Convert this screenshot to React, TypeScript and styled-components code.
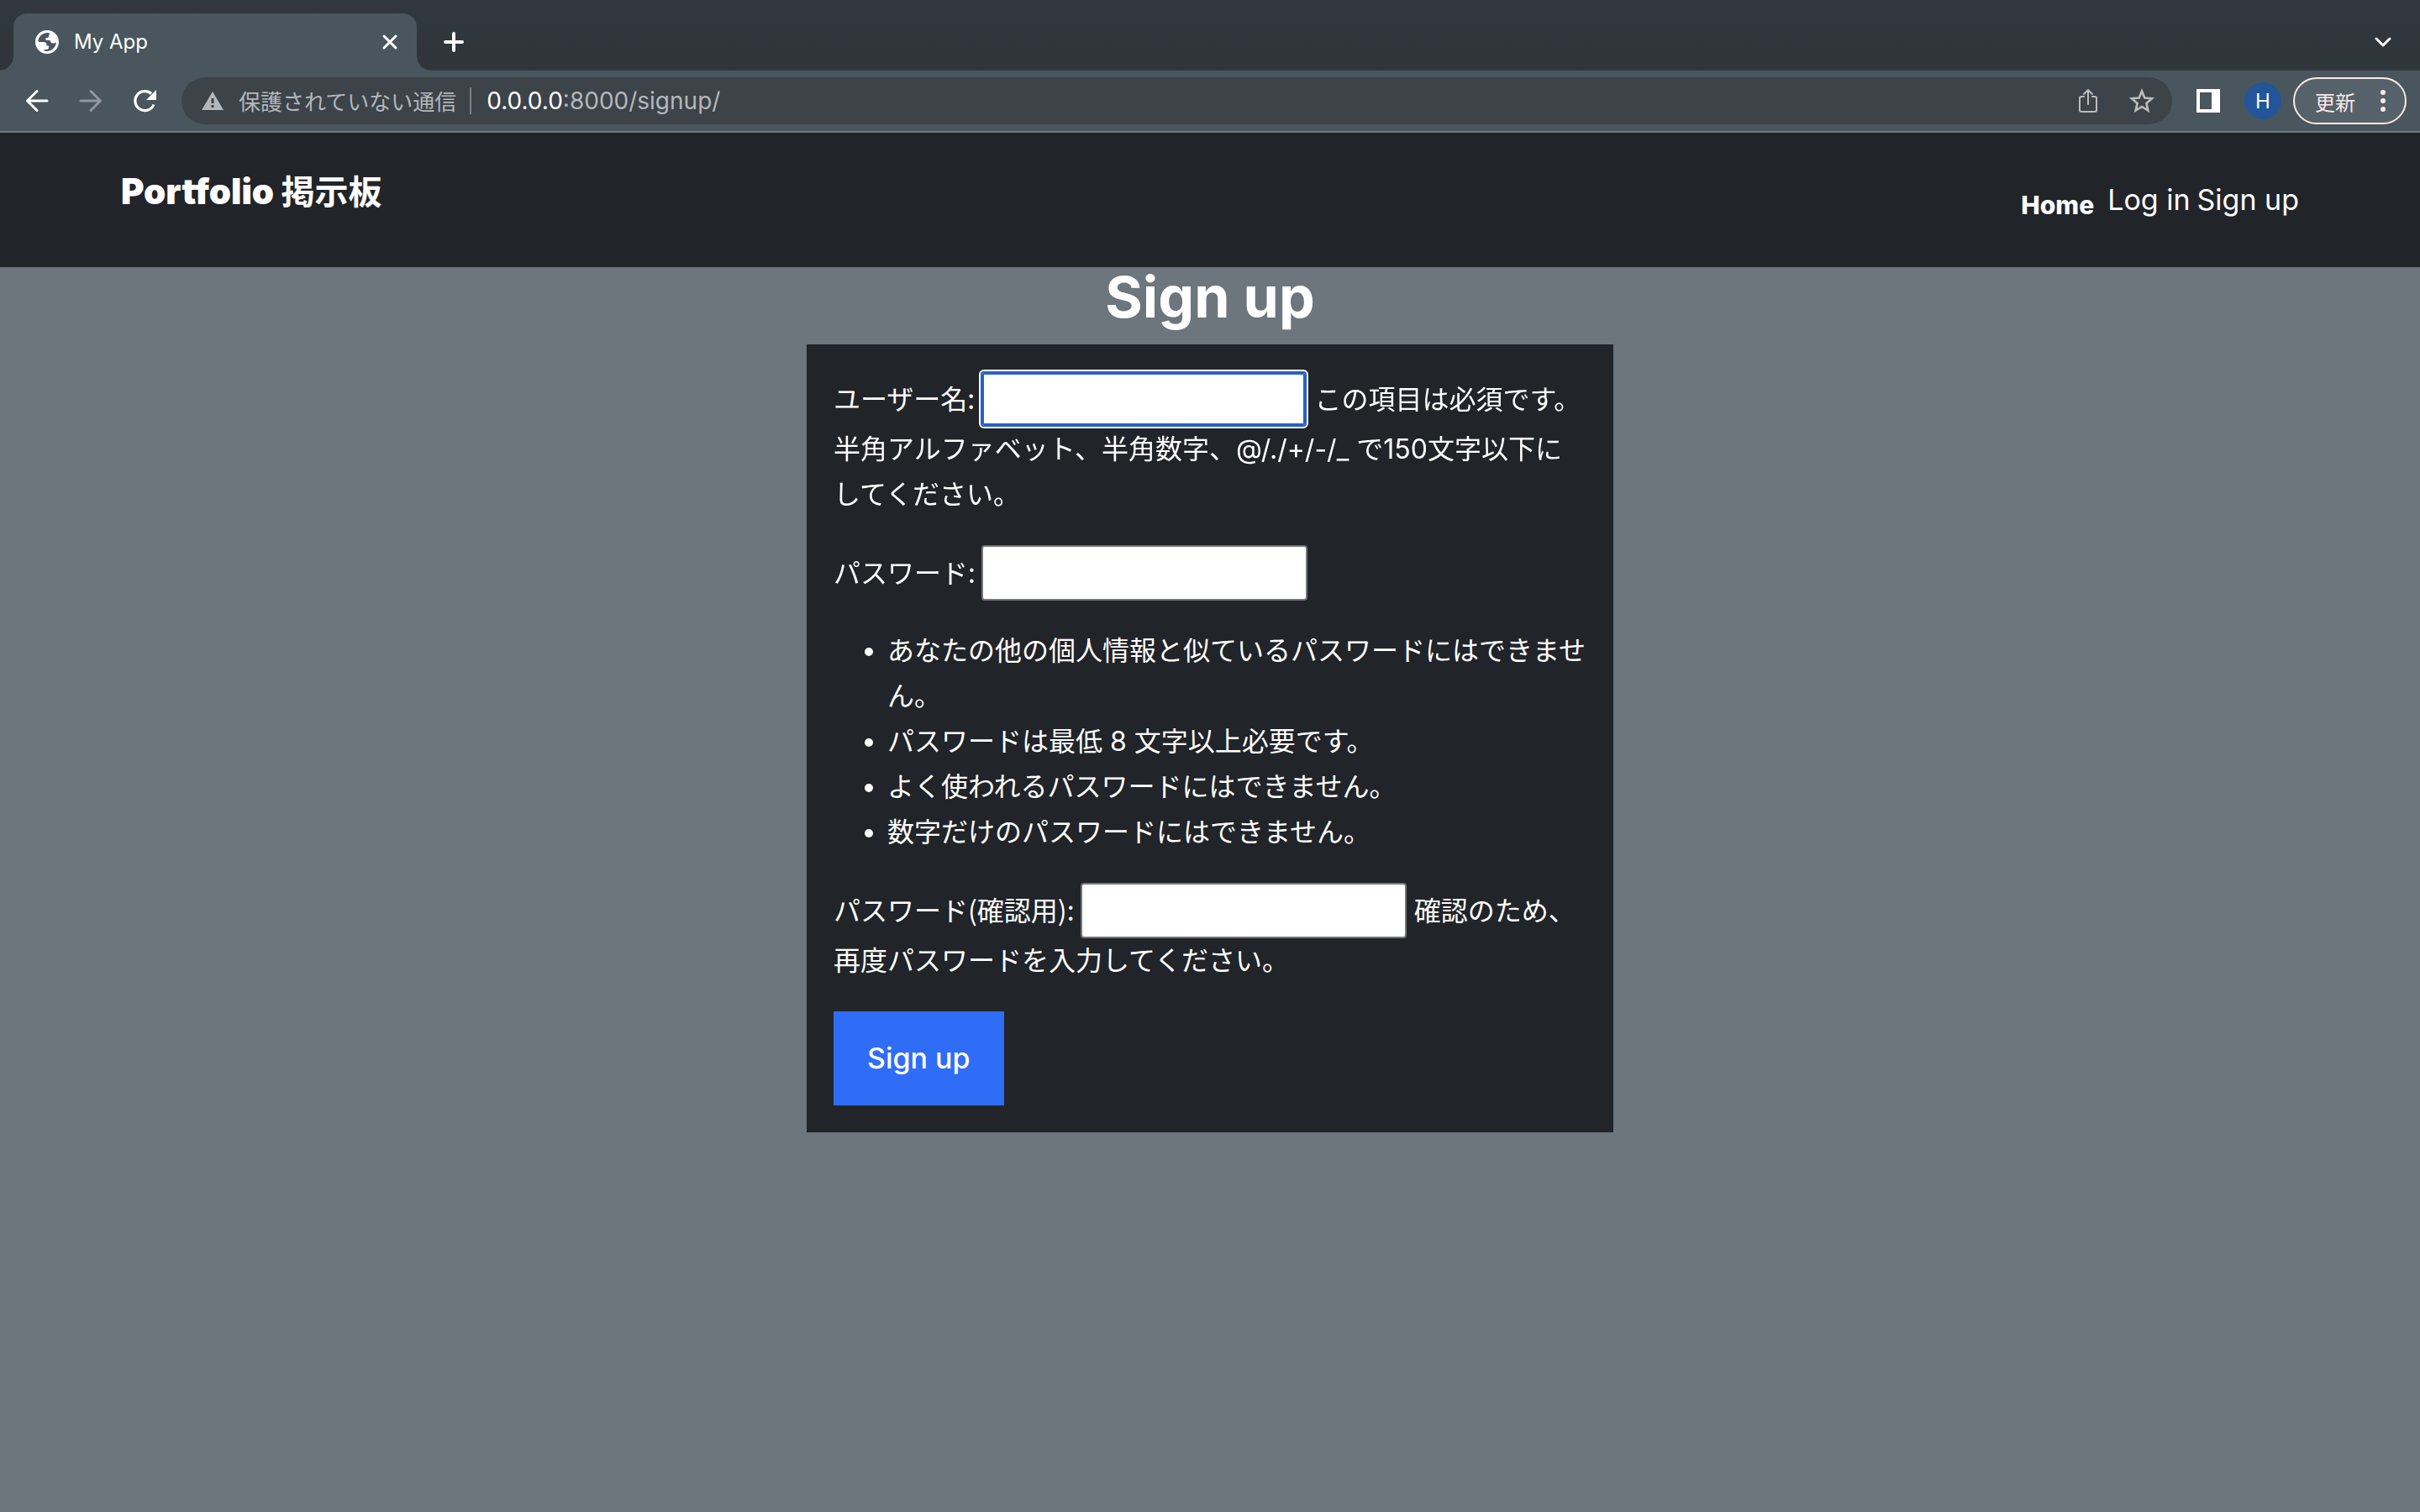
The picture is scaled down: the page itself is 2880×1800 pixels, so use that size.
import React from 'react';
import styled, { createGlobalStyle } from 'styled-components';

const japanese = '"Noto Sans CJK JP", sans-serif';
const latin = 'Inter, "Noto Sans CJK JP", sans-serif';

const GlobalStyle = createGlobalStyle`
  *, *::before, *::after { box-sizing: border-box; }
  body {
    margin: 0;
    background: #6d757d;
    color: #fff;
    font-family: ${latin};
  }
  button { font: inherit; color: inherit; }
`;

const Page = styled.div`
  min-height: 100vh;
  display: flex;
  flex-direction: column;
`;

const TabStrip = styled.div`
  display: flex;
  align-items: center;
  height: 84px;
  padding: 16px 20px 0 16px;
  background: linear-gradient(#30373f, #2e363b);
`;

const Tab = styled.div`
  position: relative;
  display: flex;
  align-items: center;
  align-self: stretch;
  width: 480px;
  padding: 0 20px 0 26px;
  border-radius: 16px 16px 0 0;
  background: #49565e;
  &::before, &::after {
    content: '';
    position: absolute;
    bottom: 0;
    width: 16px;
    height: 16px;
  }
  &::before { left: -16px; background: radial-gradient(circle at 0 0, transparent 15px, #49565e 16px); }
  &::after { right: -16px; background: radial-gradient(circle at 100% 0, transparent 15px, #49565e 16px); }
`;

const TabTitle = styled.span`
  flex: 1;
  margin-left: 18px;
  font-size: 24px;
  line-height: 32px;
`;

const IconButton = styled.button<{ $size?: number; $color?: string }>`
  display: flex;
  align-items: center;
  justify-content: center;
  flex: none;
  width: ${(p) => p.$size ?? 48}px;
  height: ${(p) => p.$size ?? 48}px;
  padding: 0;
  border: 0;
  background: none;
  color: ${(p) => p.$color ?? '#fff'};
`;

const NewTab = styled(IconButton)`
  margin: 0 auto 0 20px;
`;

const SidePanelButton = styled(IconButton)`
  width: 86px;
`;

const Toolbar = styled.div`
  display: flex;
  align-items: center;
  height: 74px;
  padding: 0 16px 0 20px;
  background: #49565e;
  border-bottom: 2px solid #6f7a80;
`;

const HistoryButtons = styled.div`
  display: flex;
  gap: 16px;
  margin-right: 20px;
`;

const AddressBar = styled.div`
  display: flex;
  align-items: center;
  flex: 1;
  height: 56px;
  padding: 0 12px 0 24px;
  border-radius: 28px;
  background: #3c4349;
  color: #b4b7ba;
  font-size: 26px;
  line-height: 40px;
`;

const Warning = styled.span`
  margin: 0 18px;
  padding-right: 16px;
  border-right: 2px solid #7b8085;
  line-height: 32px;
  font-family: ${japanese};
`;

const Address = styled.span`
  flex: 1;
  font-size: 28px;
  b { font-weight: 400; color: #fff; }
`;

const AddressActions = styled.div`
  display: flex;
  gap: 16px;
`;

const Avatar = styled.button`
  width: 44px;
  height: 44px;
  margin-right: 14px;
  padding: 0;
  border: 0;
  border-radius: 50%;
  background: #235698;
  font-size: 24px;
`;

const UpdateButton = styled.button`
  display: flex;
  align-items: center;
  gap: 30px;
  height: 56px;
  padding: 0 23px 0 24px;
  border: 2px solid #fbe9e7;
  border-radius: 28px;
  background: #566269;
  color: #fbe9e7;
  font-family: ${japanese};
  font-size: 24px;
`;

const SiteHeader = styled.header`
  display: flex;
  align-items: center;
  justify-content: space-between;
  height: 160px;
  padding: 0 5%;
  background: #212429;
`;

const Brand = styled.a`
  padding-bottom: 20px;
  color: #fff;
  font-size: 42px;
  font-weight: 900;
  line-height: 48px;
  text-decoration: none;
  span { font-size: 40px; font-weight: 700; }
`;

const Nav = styled.nav`
  display: flex;
  align-items: center;
  gap: 8px;
  line-height: 40px;
`;

const NavLink = styled.a`
  color: #fff;
  font-size: 34px;
  text-decoration: none;
`;

const HomeLink = styled(NavLink)`
  padding: 12px 8px 0 0;
  font-size: 30px;
  font-weight: 800;
`;

const Main = styled.main`
  display: grid;
  grid-template-columns: repeat(3, 1fr);
`;

const Title = styled.h1`
  grid-column: 1 / -1;
  margin: 0;
  padding-bottom: 22px;
  font-size: 68px;
  font-weight: 700;
  line-height: 70px;
  text-align: center;
`;

const Form = styled.form`
  grid-column: 2;
  padding: 32px;
  background: #212429;
  font-size: 32px;
  line-height: 54px;
`;

const Field = styled.p`
  margin: 0 0 33px;
`;

const Label = styled.label`
  font-family: ${japanese};
  line-height: 46px;
`;

const TextInput = styled.input`
  width: 388px;
  height: 66px;
  padding: 2px 4px;
  border: 2px solid #767676;
  border-radius: 4px;
  background: #fff;
  color: #000;
  font: inherit;
  vertical-align: baseline;
  &:focus {
    border-color: #2860c8;
    outline: 2px solid #fff;
    box-shadow: inset 0 0 0 2px #2860c8;
  }
`;

const Rules = styled.ul`
  margin: 0 0 33px;
  padding-left: 64px;
`;

const Submit = styled.button`
  display: block;
  padding: 32px 40px;
  border: 0;
  background: #306df6;
  font-size: 34px;
  font-weight: 500;
  line-height: 48px;
`;

const Globe = () => (
  <svg width="28" height="28" viewBox="0 0 28 28">
    <circle cx="14" cy="14" r="14" fill="#fff" />
    <path fill="#49565e" d="M16 3.200C10 2.500 4.500 6.500 3.300 12.500 4 13.500 5 14 6.500 14h3.500c2.500 0 3.500 1 3.500 3v1.500h2.500v2.500c0 1.300-1 2-3 2h-2.500v1.500C17.500 26.500 24.800 21.500 24.800 14c-1 1-2 1.500-3.500 1.500-2.300 0-3.300-1-3.800-3.500H12.500V9h1.700c1.300 0 1.800-.8 1.800-2.300 0-1.200.3-1.700 1.500-2z" />
  </svg>
);

const Line = ({ d, size, w = 3 }: { d: string; size: number; w?: number }) => (
  <svg width={size} height={size} viewBox={`0 0 ${size} ${size}`} fill="none" stroke="currentColor" strokeWidth={w} strokeLinecap="round" strokeLinejoin="round">
    <path d={d} />
  </svg>
);

const rules = [
  'あなたの他の個人情報と似ているパスワードにはできません。',
  'パスワードは最低 8 文字以上必要です。',
  'よく使われるパスワードにはできません。',
  '数字だけのパスワードにはできません。',
];

export default function App() {
  return (
    <Page>
      <GlobalStyle />
      <TabStrip>
        <Tab>
          <Globe />
          <TabTitle>My App</TabTitle>
          <IconButton $size={24} aria-label="タブを閉じる"><Line size={24} d="M5 5 19 19M19 5 5 19" /></IconButton>
        </Tab>
        <NewTab aria-label="新しいタブ"><Line size={28} w={4} d="M14 4V24M4 14H24" /></NewTab>
        <IconButton aria-label="タブを検索"><Line size={24} d="M4 8 12 16 20 8" /></IconButton>
      </TabStrip>
      <Toolbar>
        <HistoryButtons>
          <IconButton aria-label="戻る"><Line size={32} d="M28 16H5M16 4.500 4.500 16 16 27.500" /></IconButton>
          <IconButton $color="#8f989d" aria-label="進む"><Line size={32} d="M4 16H27M16 4.500 27.500 16 16 27.500" /></IconButton>
          <IconButton aria-label="再読み込み">
            <svg width="32" height="32" viewBox="0 0 32 32">
              <path d="M27 20.500A11.500 11.500 0 1 1 24 7.500" fill="none" stroke="#fff" strokeWidth="3.200" />
              <path d="M30 3v12H18z" fill="#fff" />
            </svg>
          </IconButton>
        </HistoryButtons>
        <AddressBar>
          <svg width="26" height="22" viewBox="0 0 26 22">
            <path fill="#b4b7ba" d="M13 0 26 22H0z" />
            <path fill="#3c4349" d="M11.500 8h3v6h-3zM11.500 16h3v3h-3z" />
          </svg>
          <Warning>保護されていない通信</Warning>
          <Address><b>0.0.0.0</b>:8000/signup/</Address>
          <AddressActions>
            <IconButton $color="#bdbdbd" aria-label="共有"><Line size={32} w={2} d="M11 11H8a2 2 0 0 0-2 2V27a2 2 0 0 0 2 2H24a2 2 0 0 0 2-2V13a2 2 0 0 0-2-2H21M16 20V3M11 8 16 3 21 8" /></IconButton>
            <IconButton $color="#bdbdbd" aria-label="ブックマーク">
              <svg width="32" height="32" viewBox="0 0 32 32" fill="none" stroke="currentColor" strokeWidth="2.600">
                <path d="M16 4.500 19.300 12.600 28 13.300 21.400 19 23.400 27.500 16 23 8.600 27.500 10.600 19 4 13.300 12.700 12.600z" />
              </svg>
            </IconButton>
          </AddressActions>
        </AddressBar>
        <SidePanelButton aria-label="サイドパネル">
          <svg width="28" height="28" viewBox="0 0 28 28"><path fill="#fff" fillRule="evenodd" d="M0 0H28V28H0zM4 4V24H18V4z" /></svg>
        </SidePanelButton>
        <Avatar>H</Avatar>
        <UpdateButton>
          更新
          <svg width="6" height="28" viewBox="0 0 6 28" fill="currentColor"><circle cx="3" cy="4" r="3" /><circle cx="3" cy="14" r="3" /><circle cx="3" cy="24" r="3" /></svg>
        </UpdateButton>
      </Toolbar>
      <SiteHeader>
        <Brand href="#">Portfolio <span>掲示板</span></Brand>
        <Nav>
          <HomeLink href="#">Home</HomeLink>
          <NavLink href="#">Log in</NavLink>
          <NavLink href="#">Sign up</NavLink>
        </Nav>
      </SiteHeader>
      <Main>
        <Title>Sign up</Title>
        <Form onSubmit={(e) => e.preventDefault()}>
          <Field>
            <Label htmlFor="username">ユーザー名:{' '}</Label>
            <TextInput id="username" type="text" autoFocus />{' '}
            この項目は必須です。半角アルファベット、半角数字、@/./+/-/_ で150文字以下にしてください。
          </Field>
          <Field>
            <Label htmlFor="password1">パスワード:{' '}</Label>
            <TextInput id="password1" type="password" />
          </Field>
          <Rules>{rules.map((r) => <li key={r}>{r}</li>)}</Rules>
          <Field>
            <Label htmlFor="password2">パスワード(確認用):{' '}</Label>
            <TextInput id="password2" type="password" />{' '}
            確認のため、再度パスワードを入力してください。
          </Field>
          <Submit type="submit">Sign up</Submit>
        </Form>
      </Main>
    </Page>
  );
}
